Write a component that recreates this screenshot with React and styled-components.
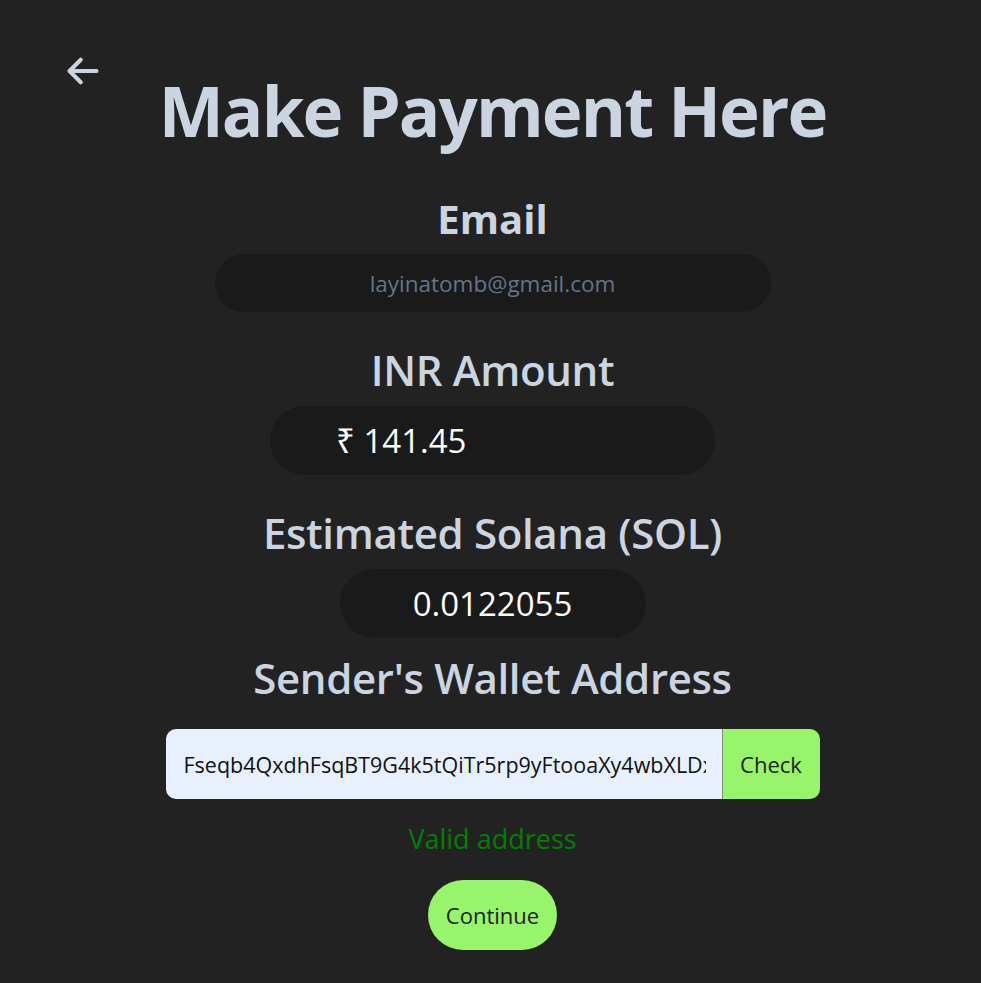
import React, { useState } from "react";
import styled, { createGlobalStyle } from "styled-components";

const GlobalStyle = createGlobalStyle`
  html, body {
    margin: 0;
    padding: 0;
    background: #222222;
  }
  body {
    font-family: "Open Sans", "Noto Sans", sans-serif;
    color: #cbd5e1;
  }
  * { box-sizing: border-box; }
`;

const Page = styled.main`
  position: relative;
  min-height: 983px;
  padding: 76px 0 30px 4px;
  display: flex;
  flex-direction: column;
  align-items: center;
`;

const BackButton = styled.button`
  position: absolute;
  left: 62px;
  top: 50px;
  width: 42px;
  height: 42px;
  padding: 0;
  border: none;
  background: none;
  color: #cbd5e1;
  cursor: pointer;
  display: flex;
  align-items: center;
  justify-content: center;
`;

const Title = styled.h1`
  margin: 0 0 54px;
  font-size: 69px;
  line-height: 1;
  font-weight: 700;
  letter-spacing: -1.9px;
  color: #cbd5e1;
`;

const Label = styled.label`
  display: block;
  margin: ${(p) => p.$top || 0}px 0 ${(p) => p.$bottom || 15}px;
  font-size: ${(p) => (p.$bold ? 40 : 42)}px;
  font-weight: ${(p) => (p.$bold ? 700 : 600)};
  letter-spacing: ${(p) => (p.$bold ? 0 : -0.35)}px;
  line-height: 1;
  color: #cbd5e1;
  text-align: center;
`;

const Field = styled.input`
  display: block;
  width: ${(p) => p.$w}px;
  height: ${(p) => p.$h}px;
  padding: 0 ${(p) => p.$pad || 0}px;
  border: none;
  outline: none;
  border-radius: 999px;
  background: #1a1a1a;
  color: ${(p) => (p.$muted ? "#64748b" : "#ffffff")};
  font-family: inherit;
  font-size: ${(p) => p.$fs}px;
  text-align: ${(p) => p.$align || "center"};
`;

const WalletRow = styled.div`
  display: flex;
  width: 654px;
  height: 70px;
  margin-top: 15px;
  border-radius: 10px;
  overflow: hidden;
`;

const WalletInput = styled.input`
  flex: 1;
  min-width: 0;
  padding: 0 16px 0 18px;
  border: none;
  outline: none;
  background: #e8f0fe;
  color: #111111;
  font-family: inherit;
  font-size: 21.5px;
`;

const CheckButton = styled.button`
  width: 98px;
  border: none;
  border-left: 1px solid #7e8f88;
  background: #97f46b;
  color: #222222;
  font-family: inherit;
  font-size: 22px;
  cursor: pointer;
`;

const Status = styled.p`
  margin: 26px 0 28px;
  font-size: 27px;
  line-height: 1;
  color: #008000;
`;

const ContinueButton = styled.button`
  width: 129px;
  height: 70px;
  border: none;
  border-radius: 999px;
  background: #97f46b;
  color: #222222;
  font-family: inherit;
  font-size: 22px;
  cursor: pointer;
`;

function ArrowLeft() {
  return (
    <svg width="36" height="36" viewBox="0 0 24 24" fill="none" stroke="currentColor" strokeWidth="2.7" strokeLinecap="round" strokeLinejoin="round">
      <path d="M10.5 19.5 3 12m0 0 7.5-7.5M3 12h18" />
    </svg>
  );
}

export default function App() {
  const [wallet, setWallet] = useState("Fseqb4QxdhFsqBT9G4k5tQiTr5rp9yFtooaXy4wbXLDx");
  return (
    <>
      <GlobalStyle />
      <Page>
        <BackButton aria-label="Back">
          <ArrowLeft />
        </BackButton>
        <Title>Make Payment Here</Title>

        <Label $bold>Email</Label>
        <Field $w={556} $h={58} $fs={22.5} $muted readOnly value="layinatomb@gmail.com" />

        <Label $top={37}>INR Amount</Label>
        <Field $w={445} $h={69} $fs={33} $align="left" $pad={66} readOnly value="₹ 141.45" />

        <Label $top={37}>Estimated Solana (SOL)</Label>
        <Field $w={306} $h={69} $fs={33} readOnly value="0.0122055" />

        <Label $top={19} $bottom={0}>Sender's Wallet Address</Label>
        <WalletRow>
          <WalletInput value={wallet} onChange={(e) => setWallet(e.target.value)} />
          <CheckButton>Check</CheckButton>
        </WalletRow>

        <Status>Valid address</Status>
        <ContinueButton>Continue</ContinueButton>
      </Page>
    </>
  );
}
